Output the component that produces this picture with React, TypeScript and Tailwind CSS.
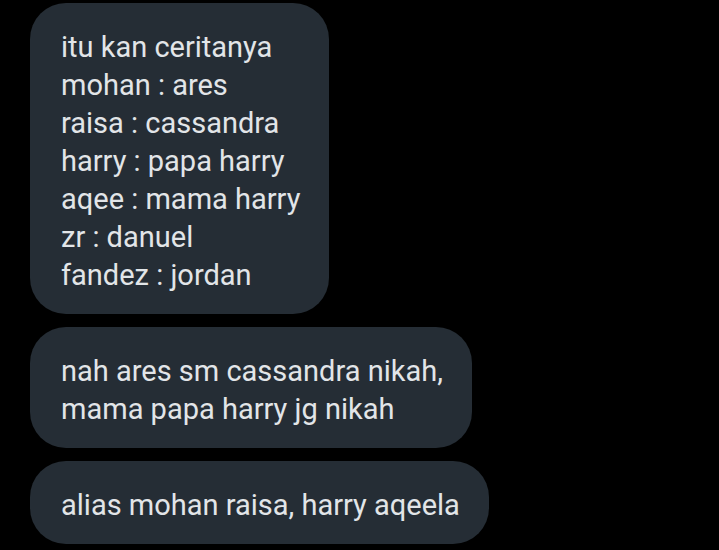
export default function App() {
  const bubble =
    "self-start bg-[#252d35] text-[#e2e5e8] rounded-[36px] pl-[31px] pr-[29px] pt-[25px] pb-[20px] text-[29px] leading-[38px]";
  return (
    <div
      className="w-[719px] h-[550px] bg-black overflow-hidden flex flex-col gap-[13px] pl-[30px] pt-[3px]"
      style={{ fontFamily: "Roboto, 'Noto Sans', sans-serif" }}
    >
      <div className={bubble}>
        <div>itu kan ceritanya</div>
        <div>mohan : ares</div>
        <div>raisa : cassandra</div>
        <div>harry : papa harry</div>
        <div>aqee : mama harry</div>
        <div>zr : danuel</div>
        <div>fandez : jordan</div>
      </div>
      <div className={bubble}>
        <div>nah ares sm cassandra nikah,</div>
        <div>mama papa harry jg nikah</div>
      </div>
      <div className={bubble}>
        <div>alias mohan raisa, harry aqeela</div>
      </div>
    </div>
  );
}
